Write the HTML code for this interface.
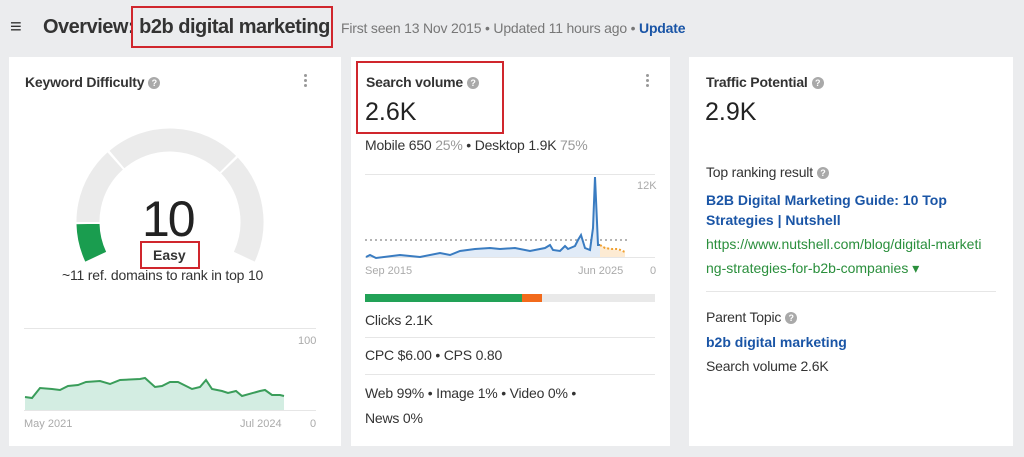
<!DOCTYPE html>
<html><head><meta charset="utf-8"><style>
*{margin:0;padding:0;box-sizing:border-box}
body{width:1024px;height:457px;background:#ebecee;font-family:"Liberation Sans",sans-serif;position:relative;overflow:hidden;color:#333}
.a{position:absolute;white-space:nowrap}
.card{position:absolute;background:#fff;top:57px;height:389px}
.h{font-size:14px;font-weight:bold;color:#333;letter-spacing:-0.2px}
.q{display:inline-block;width:12px;height:12px;border-radius:50%;background:#a9a9a9;color:#fff;font-size:9px;text-align:center;line-height:12px;vertical-align:1px;margin-left:4px;font-weight:bold}
.dots{width:4px}
.dots i{display:block;width:3px;height:3px;border-radius:50%;background:#999;margin-bottom:2px}
.g{color:#999}
.s{font-size:14px;color:#333;letter-spacing:-0.2px}
.red{position:absolute;border:2px solid #d0262d}
.sep{position:absolute;height:1px;background:#e6e6e6}
.lbl{font-size:11px;color:#aaa}
</style></head><body>
<div class="a" style="left:10px;top:16px;font-size:20px;color:#333">&#8801;</div>
<div class="a" style="left:43px;top:16px;font-size:20px;font-weight:bold;color:#333;letter-spacing:-0.5px">Overview: b2b digital marketing</div>
<div class="a" style="left:341px;top:20px;font-size:14px;color:#777;letter-spacing:-0.2px">First seen 13 Nov 2015 &bull; Updated 11 hours ago &bull; <b style="color:#1a55a6">Update</b></div>
<div class="red" style="left:131px;top:6px;width:202px;height:42px"></div>

<div class="card" style="left:9px;width:332px"></div>
<div class="card" style="left:351px;width:319px"></div>
<div class="card" style="left:689px;width:324px"></div>

<!-- card1 -->
<div class="a h" style="left:25px;top:74px">Keyword Difficulty<span class="q">?</span></div>
<div class="a dots" style="left:304px;top:74px"><i></i><i></i><i></i></div>
<svg class="a" style="left:60px;top:120px" width="220" height="150" viewBox="60 120 220 150">
<g fill="none" stroke-width="23">
<path d="M 95.7 256.7 A 82 82 0 0 1 115.2 160.9" stroke="#ebebeb"/>
<path d="M 117 159.5 A 82 82 0 0 1 228 164" stroke="#ebebeb"/>
<path d="M 229.5 165.5 A 82 82 0 0 1 244.3 256.7" stroke="#ebebeb"/>
<path d="M 95.7 256.7 A 82 82 0 0 1 88 224" stroke="#1a9d4f"/>
</g>
<line x1="76" y1="223" x2="100" y2="223" stroke="#fff" stroke-width="2"/>
</svg>
<div class="a" style="left:142px;top:190px;font-size:50px;color:#222;letter-spacing:-2px">10</div>
<div class="red" style="left:140px;top:241px;width:60px;height:28px"></div>
<div class="a" style="left:153px;top:247px;font-size:14px;font-weight:bold;color:#333">Easy</div>
<div class="a s" style="left:62px;top:267px">~11 ref. domains to rank in top 10</div>
<div class="sep" style="left:24px;top:328px;width:292px"></div>
<div class="sep" style="left:24px;top:410px;width:292px"></div>
<div class="a lbl" style="left:298px;top:335px">100</div>
<div class="a lbl" style="left:310px;top:418px">0</div>
<div class="a lbl" style="left:24px;top:418px">May 2021</div>
<div class="a lbl" style="left:240px;top:418px">Jul 2024</div>
<svg class="a" style="left:0;top:0" width="340" height="446">
<path d="M25 397 L32 398 L40 388 L52 389 L60 390 L68 386 L78 385 L86 382 L100 381 L110 384 L120 380 L140 379 L145 378 L155 387 L162 386 L170 382 L178 382 L192 389 L200 387 L206 380 L212 389 L222 391 L228 393 L236 391 L242 396 L260 391 L265 390 L272 395 L280 395 L284 396 L284 410 L25 410Z" fill="#d3ede2"/>
<path d="M25 397 L32 398 L40 388 L52 389 L60 390 L68 386 L78 385 L86 382 L100 381 L110 384 L120 380 L140 379 L145 378 L155 387 L162 386 L170 382 L178 382 L192 389 L200 387 L206 380 L212 389 L222 391 L228 393 L236 391 L242 396 L260 391 L265 390 L272 395 L280 395 L284 396" fill="none" stroke="#3a9d5a" stroke-width="2"/>
</svg>

<!-- card2 -->
<div class="a h" style="left:366px;top:74px">Search volume<span class="q">?</span></div>
<div class="a dots" style="left:646px;top:74px"><i></i><i></i><i></i></div>
<div class="a" style="left:365px;top:98px;font-size:25px;color:#222">2.6K</div>
<div class="red" style="left:356px;top:61px;width:148px;height:73px"></div>
<div class="a s" style="left:365px;top:137px">Mobile 650 <span class="g">25%</span> &bull; Desktop 1.9K <span class="g">75%</span></div>
<div class="sep" style="left:365px;top:174px;width:290px"></div>
<div class="sep" style="left:365px;top:257px;width:290px"></div>
<div class="a lbl" style="left:637px;top:180px">12K</div>
<div class="a lbl" style="left:650px;top:265px">0</div>
<div class="a lbl" style="left:365px;top:265px">Sep 2015</div>
<div class="a lbl" style="left:578px;top:265px">Jun 2025</div>
<svg class="a" style="left:0;top:0" width="680" height="300">
<line x1="365" y1="240" x2="628" y2="240" stroke="#888" stroke-width="1.3" stroke-dasharray="2,3"/>
<path d="M366 257 L370 255 L376 258 L400 255 L420 257 L440 253 L450 255 L460 251 L475 249 L490 248 L500 249 L515 248 L530 251 L545 248 L550 245 L553 250 L560 251 L565 246 L568 249 L575 246 L578 240 L581 235 L585 248 L590 250 L593 228 L595 177 L598 245 L600 245 L600 257 Z" fill="#e1ebf7"/>
<path d="M366 257 L370 255 L376 258 L400 255 L420 257 L440 253 L450 255 L460 251 L475 249 L490 248 L500 249 L515 248 L530 251 L545 248 L550 245 L553 250 L560 251 L565 246 L568 249 L575 246 L578 240 L581 235 L585 248 L590 250 L593 228 L595 177 L598 245 L600 245" fill="none" stroke="#3a7cc1" stroke-width="2"/>
<path d="M600 245 L600 257 L625 257 L625 252 L612 249Z" fill="#fdebd3"/>
<path d="M600 245 L605 248 L612 249 L618 249 L625 252" fill="none" stroke="#f0a030" stroke-width="2" stroke-dasharray="2,2"/>
</svg>
<div class="a" style="left:365px;top:294px;width:290px;height:8px;background:#e9e9e9"></div>
<div class="a" style="left:365px;top:294px;width:157px;height:8px;background:#22a257"></div>
<div class="a" style="left:522px;top:294px;width:20px;height:8px;background:#f26a1b"></div>
<div class="a s" style="left:365px;top:312px">Clicks 2.1K</div>
<div class="sep" style="left:365px;top:337px;width:290px"></div>
<div class="a s" style="left:365px;top:347px">CPC $6.00 &bull; CPS 0.80</div>
<div class="sep" style="left:365px;top:374px;width:290px"></div>
<div class="a s" style="left:365px;top:385px">Web 99% &bull; Image 1% &bull; Video 0% &bull;</div>
<div class="a s" style="left:365px;top:410px">News 0%</div>

<!-- card3 -->
<div class="a h" style="left:706px;top:74px">Traffic Potential<span class="q">?</span></div>
<div class="a" style="left:705px;top:98px;font-size:25px;color:#222">2.9K</div>
<div class="a s" style="left:706px;top:164px">Top ranking result<span class="q">?</span></div>
<div class="a" style="left:706px;top:190px;font-size:14px;font-weight:bold;color:#1a55a6;line-height:20px">B2B Digital Marketing Guide: 10 Top<br>Strategies | Nutshell</div>
<div class="a" style="left:706px;top:232px;font-size:14px;color:#2a8f3c;line-height:24px">https://www.nutshell.com/blog/digital-marketi<br>ng-strategies-for-b2b-companies &#9662;</div>
<div class="sep" style="left:706px;top:291px;width:290px"></div>
<div class="a s" style="left:706px;top:309px">Parent Topic<span class="q">?</span></div>
<div class="a" style="left:706px;top:334px;font-size:14px;font-weight:bold;color:#1a55a6">b2b digital marketing</div>
<div class="a s" style="left:706px;top:358px">Search volume 2.6K</div>
</body></html>
